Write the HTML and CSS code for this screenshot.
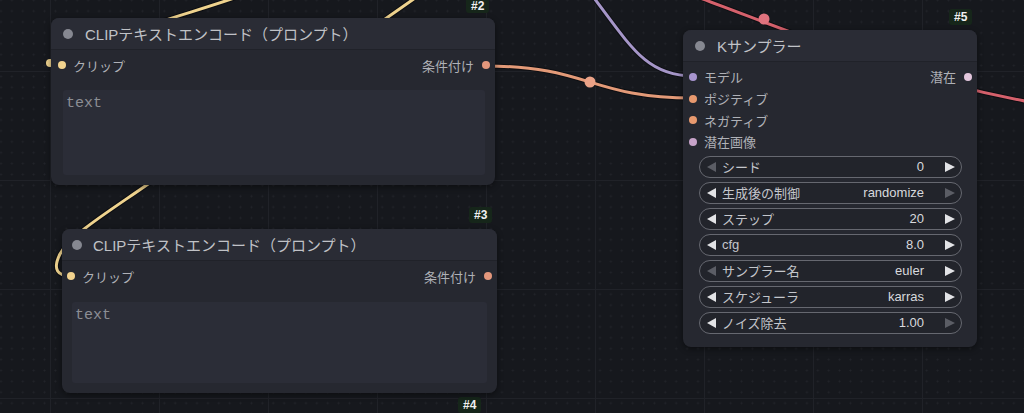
FILE: index.html
```html
<!DOCTYPE html>
<html lang="ja">
<head>
<meta charset="utf-8">
<title>ComfyUI</title>
<link rel="stylesheet" href="styles.css">
</head>
<body>
<div class="canvas">
  <svg class="wires" width="1024" height="413" viewBox="0 0 1024 413">
    <g fill="none" stroke-linecap="round">
      <path class="edge" d="M700,-2 C800,35 900,78 1030,102"/>
      <path d="M700,-2 C800,35 900,78 1030,102" stroke="#d5616c" stroke-width="3"/>
      <path class="edge" d="M588,-10 C630,45 645,76 693,76"/>
      <path d="M588,-10 C630,45 645,76 693,76" stroke="#a596c8" stroke-width="3"/>
      <path class="edge" d="M485,66 C590,66 590,98 693,98"/>
      <path d="M485,66 C590,66 590,98 693,98" stroke="#e39a78" stroke-width="3"/>
      <path class="edge" d="M150,25 C190,12 215,5 240,-4"/>
      <path d="M150,25 C190,12 215,5 240,-4" stroke="#efd38e" stroke-width="3"/>
      <path class="edge" d="M378,24 L418,-4"/>
      <path d="M378,24 L418,-4" stroke="#efd38e" stroke-width="3"/>
      <path class="edge" d="M165,172 C120,205 72,232 60,254 C52,270 58,276 71,276"/>
      <path d="M165,172 C120,205 72,232 60,254 C52,270 58,276 71,276" stroke="#efd38e" stroke-width="3"/>
    </g>
    <circle cx="50" cy="63" r="4" fill="#efd38e"/>
    <circle cx="590" cy="82" r="5.5" fill="#eba287"/>
    <circle cx="764" cy="19" r="5.5" fill="#e0737e"/>
  </svg>

  <div class="badge b2">#2</div>
  <div class="badge b3">#3</div>
  <div class="badge b4">#4</div>
  <div class="badge b5">#5</div>

  <div class="node clip n2">
    <div class="title"><span class="tdot"></span><span>CLIPテキストエンコード（プロンプト）</span></div>
    <div class="row io">
      <div class="slot"><span class="dot yellow"></span><span>クリップ</span></div>
      <div class="slot out"><span>条件付け</span><span class="dot orange"></span></div>
    </div>
    <div class="textarea">text</div>
  </div>

  <div class="node clip n3">
    <div class="title"><span class="tdot"></span><span>CLIPテキストエンコード（プロンプト）</span></div>
    <div class="row io">
      <div class="slot"><span class="dot yellow"></span><span>クリップ</span></div>
      <div class="slot out"><span>条件付け</span><span class="dot orange"></span></div>
    </div>
    <div class="textarea">text</div>
  </div>

  <div class="node ks">
    <div class="title"><span class="tdot"></span><span>Kサンプラー</span></div>
    <div class="slots">
      <div class="row io">
        <div class="slot"><span class="dot purple"></span><span>モデル</span></div>
        <div class="slot out"><span>潜在</span><span class="dot pink"></span></div>
      </div>
      <div class="row io"><div class="slot"><span class="dot orange2"></span><span>ポジティブ</span></div></div>
      <div class="row io"><div class="slot"><span class="dot orange2"></span><span>ネガティブ</span></div></div>
      <div class="row io"><div class="slot"><span class="dot mauve"></span><span>潜在画像</span></div></div>
    </div>
    <div class="widgets">
      <div class="widget"><span class="arr l dim"></span><span class="lbl">シード</span><span class="val">0</span><span class="arr r"></span></div>
      <div class="widget"><span class="arr l"></span><span class="lbl">生成後の制御</span><span class="val">randomize</span><span class="arr r dim"></span></div>
      <div class="widget"><span class="arr l"></span><span class="lbl">ステップ</span><span class="val">20</span><span class="arr r"></span></div>
      <div class="widget"><span class="arr l"></span><span class="lbl">cfg</span><span class="val">8.0</span><span class="arr r"></span></div>
      <div class="widget"><span class="arr l dim"></span><span class="lbl">サンプラー名</span><span class="val">euler</span><span class="arr r"></span></div>
      <div class="widget"><span class="arr l"></span><span class="lbl">スケジューラ</span><span class="val">karras</span><span class="arr r"></span></div>
      <div class="widget"><span class="arr l"></span><span class="lbl">ノイズ除去</span><span class="val">1.00</span><span class="arr r dim"></span></div>
    </div>
  </div>
</div>
</body>
</html>
```

FILE: styles.css
```css
* { box-sizing: border-box; }
html, body { margin: 0; padding: 0; background: #16181d; }
body {
  font-family: "Liberation Sans", "Noto Sans CJK JP", sans-serif;
  color: #b4b6bc;
}
.canvas {
  position: relative;
  width: 1024px;
  height: 413px;
  overflow: hidden;
  background-color: #16181d;
  background-image:
    linear-gradient(to right, #202228 1px, transparent 1px),
    linear-gradient(to bottom, #202228 1px, transparent 1px),
    radial-gradient(circle, #22242a 0.8px, transparent 1.2px);
  background-size: 109px 109px, 109px 109px, 10.9px 10.9px;
  background-position: 50px 0, 0 71px, 50px 71px;
}
.wires { position: absolute; left: 0; top: 0; }
.wires .edge { stroke: #0d0e12; stroke-width: 5; }

.badge {
  position: absolute;
  height: 16px;
  padding: 0 5px;
  background: #16261a;
  color: #f0f0f0;
  font-size: 12px;
  font-weight: bold;
  line-height: 16px;
  border-radius: 3px;
}
.b2 { left: 466px; top: 0; height: 13px; line-height: 12px; border-radius: 0 0 3px 3px; }
.b3 { left: 469px; top: 207px; }
.b4 { left: 458px; top: 397px; }
.b5 { left: 949px; top: 9px; }

.node {
  position: absolute;
  background: #262830;
  border-radius: 8px;
  box-shadow: 0 2px 6px rgba(0,0,0,0.45);
  display: flex;
  flex-direction: column;
}
.title {
  height: 32px;
  flex: none;
  display: flex;
  align-items: center;
  padding-left: 12px;
  gap: 12px;
  font-size: 15px;
  color: #c0c2c7;
  background: #2a2c35;
  border-radius: 8px 8px 0 0;
  border-bottom: 1px solid #202229;
}
.tdot {
  width: 10px; height: 10px; border-radius: 50%;
  background: #868891; flex: none;
}
.row {
  height: 22px;
  display: flex;
  align-items: center;
  justify-content: space-between;
  font-size: 13px;
}
.slot { display: flex; align-items: center; gap: 7px; color: #afb1b7; }
.slot.out { gap: 8px; }
.dot { width: 8px; height: 8px; border-radius: 50%; flex: none; }
.yellow { background: #f2d38e; }
.orange { background: #e3977c; }
.orange2 { background: #e8996e; }
.purple { background: #a895cf; }
.pink { background: #e2c6dc; }
.mauve { background: #c7a3c9; }

.clip .io { margin-top: 4px; padding: 0 5px 0 7px; }
.textarea {
  flex: 1;
  margin: 14px 10px 10px 12px;
  background: #2b2d37;
  border-radius: 3px;
  font-family: "Liberation Mono", "DejaVu Sans Mono", monospace;
  font-size: 15px;
  color: #8c8e94;
  padding: 5px 3px;
}
.n2 { left: 51px; top: 18px; width: 444px; height: 167px; }
.n3 { left: 62px; top: 229px; width: 435px; height: 164px; }
.n3 .title { padding-left: 10px; gap: 11px; }
.n3 .io { padding-left: 5px; padding-right: 5px; }
.n3 .textarea { margin-left: 10px; margin-top: 15px; }

.ks { left: 683px; top: 30px; width: 294px; height: 317px; }
.slots { margin-top: 4px; padding: 0 5px 0 6px; display: flex; flex-direction: column; }
.slots .row { height: 21.7px; }
.widgets {
  margin: 3px 15px 0 16px;
  display: flex;
  flex-direction: column;
  gap: 4px;
}
.widget {
  height: 22px;
  border: 1px solid #666870;
  border-radius: 11px;
  background: #22242b;
  display: flex;
  align-items: center;
  padding: 0 6px 0 7px;
  font-size: 13px;
}
.widget .lbl { margin-left: 6px; color: #c4c6cb; flex: 1; }
.widget .val { color: #d8d9dd; margin-right: 21px; }
.arr { width: 0; height: 0; border-top: 5.5px solid transparent; border-bottom: 5.5px solid transparent; flex: none; }
.arr.l { border-right: 9px solid #e2e3e6; }
.arr.r { border-left: 10px solid #e2e3e6; }
.arr.l.dim { border-right-color: #5b5d65; }
.arr.r.dim { border-left-color: #5b5d65; }
```
